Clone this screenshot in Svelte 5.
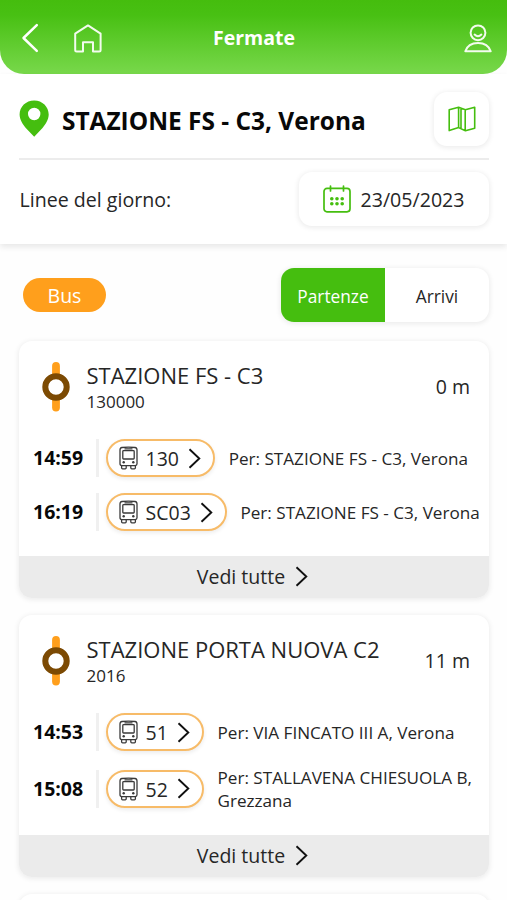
<script>
  const stops = [
    {
      name: 'STAZIONE FS - C3',
      code: '130000',
      distance: '0 m',
      rides: [
        { time: '14:59', line: '130', to: ['STAZIONE FS - C3, Verona'] },
        { time: '16:19', line: 'SC03', to: ['STAZIONE FS - C3, Verona'] }
      ]
    },
    {
      name: 'STAZIONE PORTA NUOVA C2',
      code: '2016',
      distance: '11 m',
      rides: [
        { time: '14:53', line: '51', to: ['VIA FINCATO III A, Verona'] },
        { time: '15:08', line: '52', to: ['STALLAVENA CHIESUOLA B,', 'Grezzana'] }
      ]
    }
  ];
</script>

{#snippet chevron()}
  <svg class="chevron" width="13" height="21" viewBox="0 0 13 21">
    <path d="M1.5 1.2 11.300 10.5 1.5 19.8" fill="none" stroke="#111" stroke-width="1.9" />
  </svg>
{/snippet}

<div class="screen">
  <header>
    <svg class="back" width="18" height="30" viewBox="0 0 18 30">
      <path d="M15.8 2.2 2.5 15 15.8 27.8" fill="none" stroke="#fff" stroke-width="2.5" stroke-linecap="round" stroke-linejoin="round" />
    </svg>
    <svg class="home" width="28" height="29" viewBox="0 0 28 29">
      <path d="M14 1.4 1.2 9.7V26q0 1.5 1.5 1.5H9V18.3h10v9.2h6.1q1.5 0 1.5-1.5V9.7Z" fill="none" stroke="#fff" stroke-opacity=".92" stroke-width="2" stroke-linejoin="round" />
    </svg>
    <h1>Fermate</h1>
    <svg class="user" width="28" height="29" viewBox="0 0 28 29">
      <g fill="none" stroke="#fff" stroke-opacity=".92" stroke-width="2" stroke-linejoin="round" stroke-linecap="round">
        <circle cx="14" cy="8.8" r="7.4" />
        <path d="M10.6 10.6q3.4 3.2 6.8 0M1.3 27.2C3.2 21.5 8 18.9 14 18.9s10.8 2.6 12.7 8.3Z" />
      </g>
    </svg>
  </header>

  <section class="panel">
    <div class="place">
      <svg class="pin" width="30" height="37" viewBox="0 0 30 37">
        <path fill="#45be0f" fill-rule="evenodd" d="M15.2 .5C6.900.5.600 6.800.600 14.500c0 5 3.200 9.800 6.200 13.500L15.200 36.700 23.500 28c3-3.700 6.200-8.500 6.200-13.500C29.700 6.800 23.400.5 15.200 .5Zm0 7.300a6.200 6.200 0 1 1 0 12.400 6.200 6.200 0 0 1 0-12.400Z" />
      </svg>
      <h2>STAZIONE FS - C3, Verona</h2>
      <button class="box map" aria-label="Mappa">
        <svg width="28" height="26" viewBox="0 0 28 26">
          <path d="M1.2 3.8 10.6 1.3 17.4 3.8 26.7 1.2V22.2L17.4 24.8 10.6 21.6 1.2 24.6ZM10.6 1.3V21.6M13 2.200V22.5M17.2 3.8V24.8" fill="none" stroke="#45be0f" stroke-width="1.6" stroke-linejoin="round" />
        </svg>
      </button>
    </div>
    <div class="day">
      <span class="caption">Linee del giorno:</span>
      <button class="box date">
        <svg width="28" height="28" viewBox="0 0 28 28">
          <g fill="none" stroke="#45be0f" stroke-width="1.7">
            <rect x="1" y="3.4" width="26" height="23.4" rx="3" />
            <path d="M7.5 1v5M20.5 1v5" stroke-linecap="round" />
          </g>
          <g fill="#45be0f">
            {#each [8.8, 14, 19.2] as x}
              <circle cx={x} cy="13.8" r="1.8" />
              <circle cx={x} cy="18.8" r="1.8" />
            {/each}
          </g>
        </svg>
        <span>23/05/2023</span>
      </button>
    </div>
  </section>

  <div class="filters">
    <span class="mode">Bus</span>
    <div class="toggle">
      <button class="active">Partenze</button>
      <button>Arrivi</button>
    </div>
  </div>

  <main>
    {#each stops as stop}
      <article>
        <div class="top">
          <svg width="28" height="50" viewBox="0 0 28 50">
            <path d="M14 4v41.5" stroke="#ff9f1c" stroke-width="7.8" stroke-linecap="round" />
            <circle cx="14" cy="25" r="10.7" fill="#fff" stroke="#7c4a03" stroke-width="6" />
          </svg>
          <div class="label">
            <h3>{stop.name}</h3>
            <p>{stop.code}</p>
          </div>
          <span class="distance">{stop.distance}</span>
        </div>
        <ul>
          {#each stop.rides as ride}
            <li>
              <time>{ride.time}</time>
              <i></i>
              <button class="line">
                <svg width="19" height="24" viewBox="0 0 19 24">
                  <g fill="none" stroke="#3a3a3a" stroke-width="1.3">
                    <path d="M3 1.5Q9.5.6 16 1.5 18 1.8 18 4V17.8Q18 19.600 16.300 19.6H2.700Q1 19.600 1 17.8V4Q1 1.8 3 1.5Z" />
                    <rect x="3.800" y="4.700" width="11.400" height="8.300" rx=".8" />
                    <path d="M5.500 2.900h8M2.6 19.8v2q0 1 1 1H6.200q1 0 1-1v-2M11.800 19.8v2q0 1 1 1h2.600q1 0 1-1v-2" />
                  </g>
                  <circle cx="4.7" cy="16.3" r="1.2" fill="#3a3a3a" />
                  <circle cx="14.3" cy="16.3" r="1.2" fill="#3a3a3a" />
                </svg>
                <span>{ride.line}</span>
                {@render chevron()}
              </button>
              <p class="to">Per: {ride.to[0]}{#if ride.to[1]}<br />{ride.to[1]}{/if}</p>
            </li>
          {/each}
        </ul>
        <button class="all"><span>Vedi tutte</span>{@render chevron()}</button>
      </article>
    {/each}
    <article class="next"></article>
  </main>
</div>

<style>
  :global(body) {
    overflow: hidden;
    background: #fff;
  }
  .screen,
  .screen :global(*) {
    box-sizing: border-box;
  }
  .screen {
    height: 900px;
    overflow: hidden;
    background: #fefefe;
    font-family: 'Open Sans', 'Noto Sans', sans-serif;
    color: #262626;
  }
  h1, h2, h3, p, ul {
    margin: 0;
    padding: 0;
    font-weight: 400;
  }
  button {
    font: inherit;
    color: inherit;
    border: 0;
    padding: 0;
    margin: 0;
    background: none;
  }
  svg {
    display: block;
    flex: none;
  }
  header {
    height: 74px;
    padding: 2px 15px 0 21px;
    display: grid;
    grid-template-columns: 53px 28px 1fr 28px;
    align-items: center;
    border-radius: 0 0 24px 24px;
    background: linear-gradient(#45bd0e, #48c013 20%, #78d84b);
  }
  h1 {
    text-align: center;
    padding: 0 58px 1px 0;
    font-size: 19.5px;
    font-weight: 700;
    color: #fff;
    white-space: nowrap;
  }
  .panel {
    height: 170px;
    padding: 0 18px 0 19px;
    background: #fff;
    box-shadow: 0 3px 6px rgba(0, 0, 0, 0.09);
  }
  .place {
    display: flex;
    align-items: center;
    height: 86px;
    padding-top: 5px;
    border-bottom: 2px solid #ececec;
  }
  h2 {
    flex: 1;
    margin-left: 13px;
    padding-top: 4px;
    font-size: 24.45px;
    font-weight: 700;
    color: #080808;
    white-space: nowrap;
  }
  .box {
    display: flex;
    align-items: center;
    justify-content: center;
    height: 54px;
    border-radius: 13px;
    background: #fff;
    box-shadow: 0 1px 5px 1px rgba(0, 0, 0, 0.075);
  }
  .map {
    width: 55px;
  }
  .day {
    display: flex;
    align-items: center;
    justify-content: space-between;
    height: 78px;
    font-size: 19.6px;
  }
  .caption {
    padding: 0 0 0 0.5px;
  }
  .date {
    width: 190px;
    gap: 10px;
    padding-right: 1px;
  }
  .date span {
    padding-bottom: 0;
  }
  .filters {
    display: flex;
    align-items: center;
    justify-content: space-between;
    height: 54px;
    margin: 24px 18px 0 23px;
  }
  .mode {
    width: 83px;
    height: 34px;
    padding-top: 1px;
    border-radius: 17px;
    background: #ff9f1c;
    color: #fff;
    font-size: 19.5px;
    line-height: 34px;
    text-align: center;
  }
  .toggle {
    display: flex;
    width: 208px;
    height: 54px;
    overflow: hidden;
    border-radius: 13px;
    background: #fff;
    box-shadow: 0 1px 5px 1px rgba(0, 0, 0, 0.075);
    font-size: 17.3px;
  }
  .toggle button {
    flex: 1;
    padding-top: 2px;
  }
  .toggle .active {
    background: #45be0f;
    color: #fff;
  }
  main {
    display: flex;
    flex-direction: column;
    gap: 17px;
    padding: 19px 18px 0 19px;
  }
  article {
    overflow: hidden;
    border-radius: 13px;
    background: #fff;
    box-shadow: 0 1px 5px 1px rgba(0, 0, 0, 0.07);
  }
  .next {
    height: 60px;
  }
  .top {
    display: flex;
    align-items: center;
    height: 95px;
    padding: 0 19px 4px 23px;
  }
  .label {
    flex: 1;
    margin-left: 16.5px;
    padding-top: 3px;
  }
  h3 {
    font-size: 22px;
    line-height: 27px;
    white-space: nowrap;
  }
  .label p {
    font-size: 17px;
    line-height: 25px;
  }
  .distance {
    font-size: 19.5px;
  }
  ul {
    display: flex;
    flex-direction: column;
    gap: 10px;
    padding-bottom: 22px;
    list-style: none;
  }
  li {
    display: flex;
    align-items: center;
    min-height: 44px;
    padding-left: 14px;
  }
  time {
    width: 63px;
    font-size: 19.5px;
    line-height: 26px;
    font-weight: 700;
    color: #080808;
  }
  i {
    width: 3px;
    height: 38px;
    margin-right: 7px;
    background: #f0f0f0;
  }
  .line {
    display: flex;
    align-items: center;
    flex: none;
    height: 38px;
    padding: 0 12px 0 10.5px;
    border: 2px solid #f7bb68;
    border-radius: 19px;
    background: #fff;
    box-shadow: 0 2px 4px rgba(0, 0, 0, 0.08);
    font-size: 19.5px;
  }
  .line span {
    margin: 0 9px 0 8px;
    padding-top: 2px;
    line-height: 26px;
  }
  .to {
    margin-left: 13.7px;
    padding: 1px 0 0;
    font-size: 17.12px;
    line-height: 23.5px;
    white-space: nowrap;
  }
  li:last-child:has(br) {
    height: 49px;
  }
  .all {
    display: flex;
    align-items: center;
    justify-content: center;
    gap: 10px;
    width: 100%;
    height: 42px;
    padding: 0 3px 2px 0;
    background: #ebebeb;
    font-size: 19.5px;
  }
</style>
